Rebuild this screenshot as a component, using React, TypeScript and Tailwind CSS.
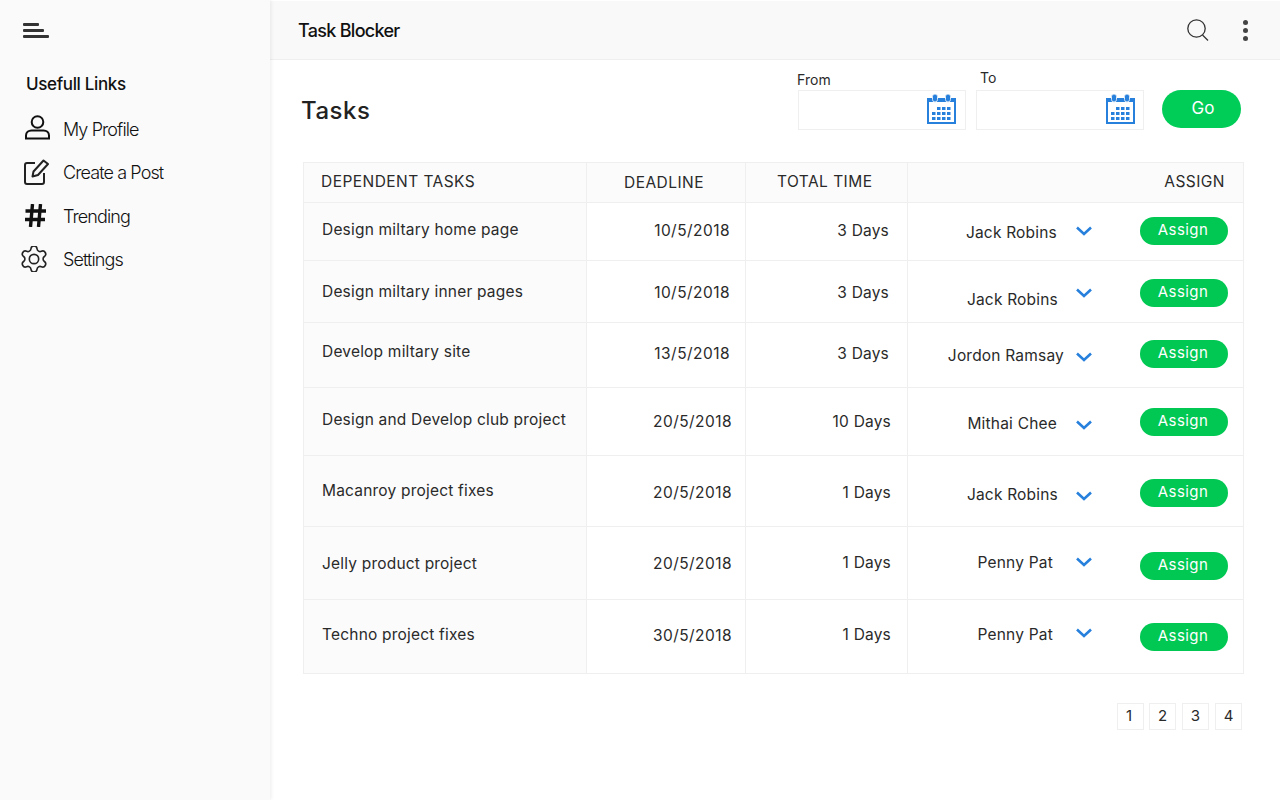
interface ITask {
    name: string,
    date: string,
    time: string,
    person: string,
    rowH: string,
    taskPad: string,
    datePad: string,
    timePad: string,
    personPad: string,
    chevronPad: string,
    btnPad: string,
    dateRight: string,
    timeRight: string,
    personRight: string,
}

const tasks: ITask[] = [
    { name: "Design miltary home page", date: "10/5/2018", time: "3 Days", person: "Jack Robins", rowH: "h-[58px]", taskPad: "pt-[16px]", datePad: "pt-[17px]", timePad: "pt-[17px]", personPad: "pt-[19px]", chevronPad: "pt-[23px]", btnPad: "pt-[14px]", dateRight: "pr-[15px]", timeRight: "pr-[18px]", personRight: "pr-[19px]" },
    { name: "Design miltary inner pages", date: "10/5/2018", time: "3 Days", person: "Jack Robins", rowH: "h-[62px]", taskPad: "pt-[20px]", datePad: "pt-[21px]", timePad: "pt-[21px]", personPad: "pt-[28px]", chevronPad: "pt-[27px]", btnPad: "pt-[18px]", dateRight: "pr-[15px]", timeRight: "pr-[18px]", personRight: "pr-[18px]" },
    { name: "Develop miltary site", date: "13/5/2018", time: "3 Days", person: "Jordon Ramsay", rowH: "h-[65px]", taskPad: "pt-[18px]", datePad: "pt-[20px]", timePad: "pt-[20px]", personPad: "pt-[22px]", chevronPad: "pt-[29px]", btnPad: "pt-[17px]", dateRight: "pr-[15px]", timeRight: "pr-[18px]", personRight: "pr-[12px]" },
    { name: "Design and Develop club project", date: "20/5/2018", time: "10 Days", person: "Mithai Chee", rowH: "h-[68px]", taskPad: "pt-[21px]", datePad: "pt-[23px]", timePad: "pt-[23px]", personPad: "pt-[25px]", chevronPad: "pt-[32px]", btnPad: "pt-[20px]", dateRight: "pr-[13px]", timeRight: "pr-[16px]", personRight: "pr-[19px]" },
    { name: "Macanroy project fixes", date: "20/5/2018", time: "1 Days", person: "Jack Robins", rowH: "h-[71px]", taskPad: "pt-[24px]", datePad: "pt-[26px]", timePad: "pt-[26px]", personPad: "pt-[28px]", chevronPad: "pt-[35px]", btnPad: "pt-[23px]", dateRight: "pr-[13px]", timeRight: "pr-[16px]", personRight: "pr-[18px]" },
    { name: "Jelly product project", date: "20/5/2018", time: "1 Days", person: "Penny Pat", rowH: "h-[73px]", taskPad: "pt-[26px]", datePad: "pt-[26px]", timePad: "pt-[25px]", personPad: "pt-[25px]", chevronPad: "pt-[30px]", btnPad: "pt-[25px]", dateRight: "pr-[13px]", timeRight: "pr-[16px]", personRight: "pr-[23px]" },
    { name: "Techno project fixes", date: "30/5/2018", time: "1 Days", person: "Penny Pat", rowH: "h-[73px]", taskPad: "pt-[24px]", datePad: "pt-[25px]", timePad: "pt-[24px]", personPad: "pt-[24px]", chevronPad: "pt-[28px]", btnPad: "pt-[23px]", dateRight: "pr-[13px]", timeRight: "pr-[16px]", personRight: "pr-[23px]" },
]

const CalendarIcon = () => (
    <svg width="29" height="30" viewBox="0 0 29 30" className="shrink-0 -mt-[2px]">
        <rect x="0" y="4" width="29" height="26" fill="#2680dc" />
        <rect x="2" y="8" width="25" height="20" fill="#fff" />
        <rect x="5.5" y="0" width="5" height="8" rx="2.5" fill="#2680dc" stroke="#dbe9f7" strokeWidth="1" />
        <rect x="18.5" y="0" width="5" height="8" rx="2.5" fill="#2680dc" stroke="#dbe9f7" strokeWidth="1" />
        {[13, 18, 23].map((y, r) =>
            [5, 10, 15, 20].map((x, c) =>
                (r === 0 && c === 0) ? null : <rect key={`${r}-${c}`} x={x} y={y} width="3.5" height="3" fill="#2680dc" />
            )
        )}
    </svg>
)

const Chevron = () => (
    <svg width="16" height="10" viewBox="0 0 16 10" className="block">
        <path d="M1 1.5 L8 8 L15 1.5" fill="none" stroke="#2680dc" strokeWidth="2.6" />
    </svg>
)

const App = () => {
    return (
        <div className="flex h-screen w-full overflow-hidden bg-white font-['Inter',sans-serif] text-[#2a2a2a]">
            <aside className="w-[270px] shrink-0 bg-[#fafafa] shadow-[1px_0_4px_rgba(0,0,0,0.08)] z-10">
                <div className="pl-[23px] pt-[23px]">
                    <svg width="26" height="16" viewBox="0 0 26 16" className="block">
                        <rect x="0" y="0" width="16" height="3" rx="1" fill="#333" />
                        <rect x="0" y="6" width="21" height="3" rx="1" fill="#333" />
                        <rect x="0" y="12" width="26" height="3" rx="1" fill="#333" />
                    </svg>
                </div>
                <h2 className="pl-[26px] pt-[33px] text-[17px] leading-[24px] font-medium tracking-[-0.35px] text-[#111]">Usefull Links</h2>
                <nav className="text-[18px] leading-[24px] font-light tracking-[-0.9px] text-[#111]">
                    <div className="flex items-center h-[43px] mt-[11px]">
                        <div className="w-[63px] pl-[25px] -mt-[2px]">
                            <svg width="25" height="25" viewBox="0 0 25 25" fill="none" stroke="#111" strokeWidth="2">
                                <circle cx="12.5" cy="7" r="5.8" />
                                <path d="M1 23.5 V20.5 C1 17.5 3.5 15.5 6.5 15.5 H18.5 C21.5 15.5 24 17.5 24 20.5 V23.5 Z" />
                            </svg>
                        </div>
                        <span className="pt-[2px]">My Profile</span>
                    </div>
                    <div className="flex items-center h-[43px]">
                        <div className="w-[63px] pl-[24px]">
                            <svg width="25" height="26" viewBox="0 0 25 26" fill="none" stroke="#222" strokeWidth="2" strokeLinejoin="round">
                                <path d="M11 4 H3 a2 2 0 0 0 -2 2 V23 a2 2 0 0 0 2 2 H18 a2 2 0 0 0 2 -2 V14" />
                                <path d="M8.5 17.5 L9.5 12.5 L19.5 1.5 L24 5 L14 16 Z" />
                            </svg>
                        </div>
                        <span className="pt-[2px]">Create a Post</span>
                    </div>
                    <div className="flex items-center h-[44px]">
                        <div className="w-[63px] pl-[25px]">
                            <svg width="21" height="23" viewBox="0 0 21 23" stroke="#111" strokeWidth="3.4" fill="none">
                                <path d="M7.5 0 L5.5 23 M15.5 0 L13.5 23 M0.5 7 H21 M0 15.5 H20" />
                            </svg>
                        </div>
                        <span className="pt-[4px]">Trending</span>
                    </div>
                    <div className="flex items-center h-[43px]">
                        <div className="w-[63px] pl-[21px]">
                            <svg width="26" height="26" viewBox="2 2 20 20" fill="none" stroke="#222" strokeWidth="1.25" strokeLinecap="round" strokeLinejoin="round">
                                <path d="M9.671 4.136a2.34 2.34 0 0 1 4.659 0 2.34 2.34 0 0 0 3.319 1.915 2.34 2.34 0 0 1 2.33 4.033 2.34 2.34 0 0 0 0 3.831 2.34 2.34 0 0 1-2.33 4.033 2.34 2.34 0 0 0-3.319 1.915 2.34 2.34 0 0 1-4.659 0 2.34 2.34 0 0 0-3.32-1.915 2.34 2.34 0 0 1-2.33-4.033 2.34 2.34 0 0 0 0-3.831A2.34 2.34 0 0 1 6.35 6.051a2.34 2.34 0 0 0 3.319-1.915" />
                                <circle cx="12" cy="12" r="3.6" />
                            </svg>
                        </div>
                        <span className="pt-[2px]">Settings</span>
                    </div>
                </nav>
            </aside>

            <main className="flex-1 min-w-0">
                <header className="h-[59px] mt-px bg-[#f9f9f9] border-b border-[#efefef] flex items-center justify-between pl-[28px] pr-[32px]">
                    <h1 className="text-[18px] font-medium tracking-[-0.7px] text-[#111]">Task Blocker</h1>
                    <div className="flex items-center gap-[34px]">
                        <svg width="22" height="22" viewBox="0 0 22 22" fill="none" stroke="#333" strokeWidth="1.3">
                            <circle cx="9.5" cy="9.5" r="8.7" />
                            <path d="M15.5 16 L21 21.5" />
                        </svg>
                        <div className="flex flex-col gap-[3px]">
                            <span className="w-[5px] h-[5px] rounded-full bg-[#444]" />
                            <span className="w-[5px] h-[5px] rounded-full bg-[#444]" />
                            <span className="w-[5px] h-[5px] rounded-full bg-[#444]" />
                        </div>
                    </div>
                </header>

                <div className="flex h-[102px]">
                    <h2 className="pl-[31px] pt-[36px] w-[526px] text-[24px] leading-[30px] font-medium tracking-[0.5px] text-[#222]">Tasks</h2>
                    <div className="w-[183px] pt-[11px]">
                        <label className="block pl-px text-[14px] leading-[18px] tracking-[0.1px]">From</label>
                        <div className="ml-[2px] mt-px w-[168px] h-[40px] border border-[#efefef] flex items-center justify-end pr-[9px]">
                            <CalendarIcon />
                        </div>
                    </div>
                    <div className="w-[183px] pt-[9px]">
                        <label className="block pl-[1px] text-[14px] leading-[18px]">To</label>
                        <div className="-ml-[3px] mt-[3px] w-[168px] h-[40px] border border-[#efefef] flex items-center justify-end pr-[8px]">
                            <CalendarIcon />
                        </div>
                    </div>
                    <div className="pt-[30px]">
                        <button className="w-[79px] h-[38px] rounded-full bg-[#00cc58] text-white text-[17px] pl-[3px]">Go</button>
                    </div>
                </div>

                <div className="ml-[33px] w-[941px] border border-[#efefef] text-[15.5px] leading-[20px] tracking-[0.2px]">
                    <div className="flex h-[40px] bg-[#fbfbfb] border-b border-[#efefef] tracking-[0.45px]">
                        <div className="w-[282px] pl-[17px] pt-[9px]">DEPENDENT TASKS</div>
                        <div className="w-[159px] border-l border-[#efefef] pl-[37px] pt-[10px]">DEADLINE</div>
                        <div className="w-[162px] border-l border-[#efefef] pl-[31px] pt-[9px]">TOTAL TIME</div>
                        <div className="flex-1 border-l border-[#efefef] pr-[18px] pt-[9px] text-right">ASSIGN</div>
                    </div>
                    {tasks.map((task: ITask, index: number) => (
                        <div key={task.name} className={`flex leading-[22px] ${task.rowH} ${index < tasks.length - 1 ? "border-b border-[#efefef]" : ""}`}>
                            <div className={`w-[282px] bg-[#fbfbfb] pl-[18px] ${task.taskPad}`}>{task.name}</div>
                            <div className={`w-[159px] border-l border-[#efefef] text-right tracking-[0.45px] ${task.dateRight} ${task.datePad}`}>{task.date}</div>
                            <div className={`w-[162px] border-l border-[#efefef] text-right ${task.timeRight} ${task.timePad}`}>{task.time}</div>
                            <div className="flex-1 flex border-l border-[#efefef]">
                                <div className={`w-[168px] text-right ${task.personRight} ${task.personPad}`}>{task.person}</div>
                                <div className={`flex-1 ${task.chevronPad}`}><Chevron /></div>
                                <div className={`w-[103px] pr-[15px] ${task.btnPad}`}>
                                    <button className="w-[88px] h-[28px] rounded-full bg-[#00c853] text-white text-[15px] leading-[24px] pb-[3px] pr-[2px] tracking-[0.4px]">Assign</button>
                                </div>
                            </div>
                        </div>
                    ))}
                </div>

                <div className="flex justify-end gap-[6px] pr-[38px] pt-[29px] text-[15px]">
                    {[1, 2, 3, 4].map(page => (
                        <div key={page} className={`w-[27px] h-[27px] border border-[#efefef] flex items-center justify-center ${page === 1 ? "-mr-px pr-[3px]" : ""}`}>{page}</div>
                    ))}
                </div>
            </main>
        </div>
    )
}

export default App
